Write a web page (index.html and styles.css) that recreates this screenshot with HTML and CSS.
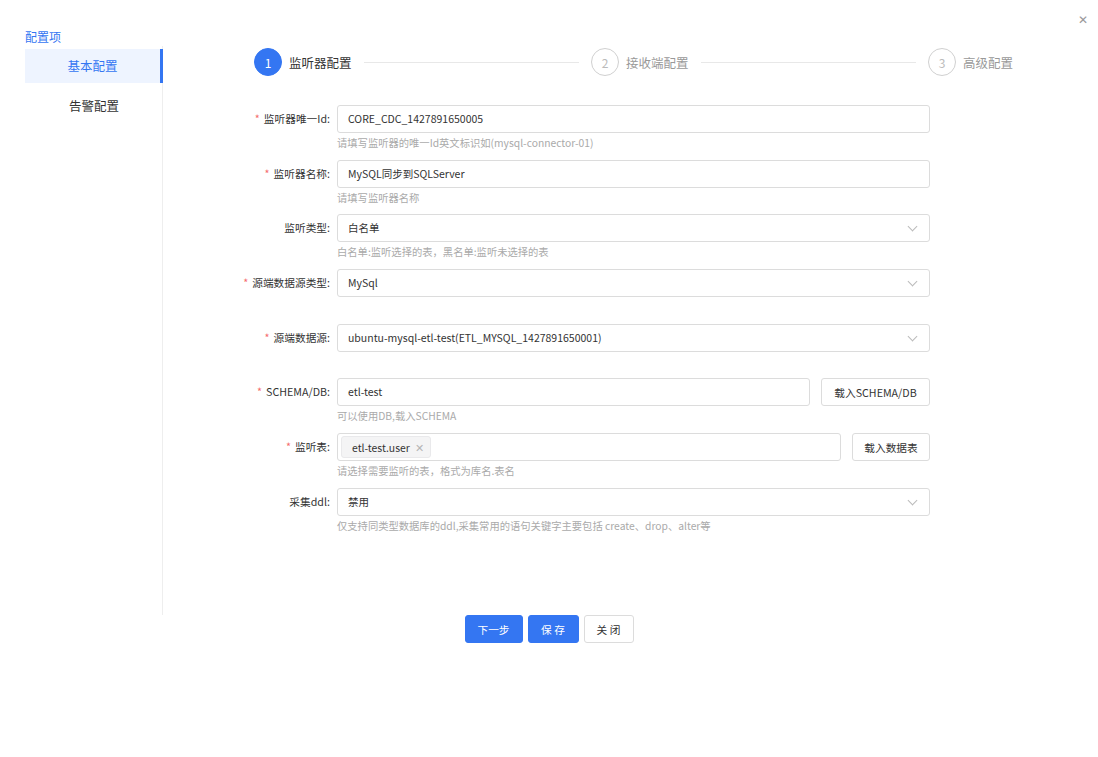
FILE: index.html
```html
<!DOCTYPE html>
<html lang="zh-CN">
<head>
    <meta charset="UTF-8">
    <meta name="viewport" content="width=device-width, initial-scale=1.0">
    <title>监听器配置</title>
    <link rel="stylesheet" href="styles.css">
</head>
<body>
    <div class="dialog">
        <span class="close-btn">&#x2715;</span>

        <div class="layout">
            <div class="sidebar">
                <div class="sidebar-title">配置项</div>
                <div class="menu">
                    <div class="menu-item active">基本配置</div>
                    <div class="menu-item">告警配置</div>
                </div>
            </div>

            <div class="main">
                <div class="steps">
                    <div class="step active">
                        <span class="step-icon">1</span>
                        <span class="step-title">监听器配置</span>
                        <span class="step-line"></span>
                    </div>
                    <div class="step">
                        <span class="step-icon">2</span>
                        <span class="step-title">接收端配置</span>
                        <span class="step-line"></span>
                    </div>
                    <div class="step last">
                        <span class="step-icon">3</span>
                        <span class="step-title">高级配置</span>
                    </div>
                </div>

                <div class="form">
                    <div class="form-item">
                        <label class="required">监听器唯一Id:</label>
                        <div class="control">
                            <div class="input">CORE_CDC_1427891650005</div>
                            <div class="help">请填写监听器的唯一Id英文标识如(mysql-connector-01)</div>
                        </div>
                    </div>

                    <div class="form-item">
                        <label class="required">监听器名称:</label>
                        <div class="control">
                            <div class="input">MySQL同步到SQLServer</div>
                            <div class="help">请填写监听器名称</div>
                        </div>
                    </div>

                    <div class="form-item">
                        <label>监听类型:</label>
                        <div class="control">
                            <div class="input select">白名单</div>
                            <div class="help">白名单:监听选择的表，黑名单:监听未选择的表</div>
                        </div>
                    </div>

                    <div class="form-item">
                        <label class="required">源端数据源类型:</label>
                        <div class="control">
                            <div class="input select">MySql</div>
                        </div>
                    </div>

                    <div class="form-item">
                        <label class="required">源端数据源:</label>
                        <div class="control">
                            <div class="input select">ubuntu-mysql-etl-test(ETL_MYSQL_1427891650001)</div>
                        </div>
                    </div>

                    <div class="form-item">
                        <label class="required">SCHEMA/DB:</label>
                        <div class="control">
                            <div class="input-row">
                                <div class="input">etl-test</div>
                                <button class="btn btn-default btn-schema">载入SCHEMA/DB</button>
                            </div>
                            <div class="help">可以使用DB,载入SCHEMA</div>
                        </div>
                    </div>

                    <div class="form-item">
                        <label class="required">监听表:</label>
                        <div class="control">
                            <div class="input-row">
                                <div class="input tags">
                                    <span class="tag">etl-test.user<span class="tag-close">&#x2715;</span></span>
                                </div>
                                <button class="btn btn-default btn-table">载入数据表</button>
                            </div>
                            <div class="help">请选择需要监听的表，格式为库名.表名</div>
                        </div>
                    </div>

                    <div class="form-item">
                        <label>采集ddl:</label>
                        <div class="control">
                            <div class="input select">禁用</div>
                            <div class="help">仅支持同类型数据库的ddl,采集常用的语句关键字主要包括 create、drop、alter等</div>
                        </div>
                    </div>
                </div>
            </div>
        </div>

        <div class="footer">
            <button class="btn btn-primary btn-next">下一步</button>
            <button class="btn btn-primary">保 存</button>
            <button class="btn btn-default">关 闭</button>
        </div>
    </div>
</body>
</html>
```

FILE: styles.css
```css
* {
    margin: 0;
    padding: 0;
    box-sizing: border-box;
}

body {
    background-color: #fff;
    font-family: 'Noto Sans CJK SC', 'Liberation Sans', sans-serif;
    font-size: 12px;
    color: #333;
}

.dialog {
    position: relative;
    width: 1098px;
    height: 757px;
    padding-top: 30px;
}

.close-btn {
    position: absolute;
    top: 10px;
    right: 10px;
    font-size: 12px;
    color: #999;
}

.layout {
    display: flex;
    height: 585px;
}

/* sidebar */
.sidebar {
    width: 163px;
    padding-left: 25px;
    display: flex;
    flex-direction: column;
}

.sidebar-title {
    color: #3476f2;
    line-height: 13px;
    height: 16px;
}

.menu {
    flex: 1;
    border-right: 1px solid #eee;
    padding-top: 3px;
}

.menu-item {
    height: 34px;
    line-height: 34px;
    text-align: center;
    font-size: 12.5px;
    color: #333;
    margin-bottom: 6px;
    margin-right: -1px;
}

.menu-item.active {
    background-color: #eef4ff;
    color: #3476f2;
    border-right: 3px solid #3476f2;
}

/* steps */
.main {
    flex: 1;
}

.steps {
    display: flex;
    align-items: center;
    margin: 17px 0 0 91px;
    width: 759px;
    height: 30px;
}

.step {
    flex: 1;
    display: flex;
    align-items: center;
}

.step.last {
    flex: none;
}

.step-icon {
    width: 28px;
    height: 28px;
    border-radius: 50%;
    border: 1px solid #d0d0d0;
    color: #bbb;
    display: flex;
    align-items: center;
    justify-content: center;
    font-size: 12px;
}

.step.active .step-icon {
    background-color: #3476f2;
    border-color: #3476f2;
    color: #fff;
}

.step-title {
    margin-left: 7px;
    font-size: 12.5px;
    color: #999;
}

.step.active .step-title {
    color: #333;
}

.step-line {
    flex: 1;
    height: 1px;
    background-color: #e8e8e8;
    margin: 0 12px;
}

/* form */
.form {
    margin-top: 28px;
    margin-left: 50px;
    font-size: 10.7px;
}

.form-item {
    display: flex;
    height: 54.7px;
}

.form-item label {
    width: 124px;
    padding-right: 7px;
    text-align: right;
    line-height: 28px;
    color: #333;
}

.form-item label.required::before {
    content: '*';
    color: #f56c6c;
    margin-right: 4px;
}

.control {
    width: 593px;
}

.input {
    height: 28px;
    line-height: 26px;
    border: 1px solid #dcdcdc;
    border-radius: 3px;
    padding: 0 10px;
    color: #333;
    font-size: 10.5px;
    flex: 1;
}

.input.select {
    position: relative;
}

.input.select::after {
    content: '';
    position: absolute;
    right: 13px;
    top: 8px;
    width: 6px;
    height: 6px;
    border-right: 1px solid #bbb;
    border-bottom: 1px solid #bbb;
    transform: rotate(45deg);
}

.input-row {
    display: flex;
    gap: 11px;
}

.input.tags {
    padding: 0 3px;
    display: flex;
    align-items: center;
}

.tag {
    background-color: #f4f4f5;
    border: 1px solid #e9e9eb;
    border-radius: 3px;
    height: 22px;
    line-height: 20px;
    padding: 0 6px 0 10px;
    font-size: 10.4px;
    color: #333;
}

.tag-close {
    color: #b5b5b5;
    font-size: 11px;
    margin-left: 5px;
}

.help {
    color: #aaa;
    font-size: 10.3px;
    line-height: 16px;
    margin-top: 2px;
}

/* buttons */
.btn {
    height: 28px;
    padding: 0;
    border-radius: 3px;
    font-family: inherit;
    font-size: 10.7px;
    white-space: nowrap;
    cursor: pointer;
}

.btn-default {
    background-color: #fff;
    border: 1px solid #dcdcdc;
    color: #333;
}

.btn-primary {
    background-color: #3476f2;
    border: 1px solid #3476f2;
    color: #fff;
    width: 51px;
}

.btn-primary.btn-next {
    width: 58px;
}

.footer .btn-default {
    width: 50px;
}

.btn-schema {
    width: 109px;
}

.btn-table {
    width: 78px;
}

.footer {
    display: flex;
    justify-content: center;
    gap: 5px;
}
```
